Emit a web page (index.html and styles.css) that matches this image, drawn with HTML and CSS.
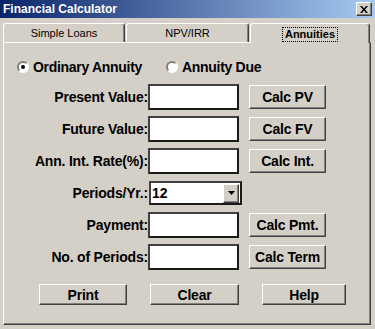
FILE: index.html
```html
<!DOCTYPE html>
<html lang="en">
<head>
  <meta charset="UTF-8" />
  <meta name="viewport" content="width=device-width, initial-scale=1.0"/>
  <title>Financial Calculator</title>
  <link rel="stylesheet" href="styles.css">
</head>
<body>

  <div class="dialog">
    <!-- title bar -->
    <div class="title-bar">
      <span class="title">Financial Calculator</span>
      <button class="close-btn" aria-label="Close">
        <svg width="8" height="7" viewBox="0 0 8 7">
          <path d="M0 0h2l2 2.5 2-2.5h2l-3 3.5 3 3.5h-2l-2-2.5-2 2.5h-2l3-3.5z" fill="#000"/>
        </svg>
      </button>
    </div>

    <!-- tabs -->
    <div class="tabs">
      <div class="tab tab-first">Simple Loans</div>
      <div class="tab tab-second">NPV/IRR</div>
      <div class="tab active"><span class="focus">Annuities</span></div>
    </div>

    <div class="panel">
      <div class="radio-row">
        <label class="radio radio-first"><span class="dot checked"></span>Ordinary Annuity</label>
        <label class="radio"><span class="dot"></span>Annuity Due</label>
      </div>

      <div class="row">
        <span class="label">Present Value:</span>
        <input class="field" type="text" />
        <button class="btn calc">Calc PV</button>
      </div>
      <div class="row">
        <span class="label">Future Value:</span>
        <input class="field" type="text" />
        <button class="btn calc">Calc FV</button>
      </div>
      <div class="row">
        <span class="label">Ann. Int. Rate(%):</span>
        <input class="field" type="text" />
        <button class="btn calc">Calc Int.</button>
      </div>
      <div class="row">
        <span class="label">Periods/Yr.:</span>
        <div class="combo">
          <span class="combo-value">12</span>
          <span class="combo-arrow">
            <svg width="7" height="4" viewBox="0 0 7 4"><path d="M0 0h7l-3.5 4z" fill="#000"/></svg>
          </span>
        </div>
      </div>
      <div class="row">
        <span class="label">Payment:</span>
        <input class="field" type="text" />
        <button class="btn calc">Calc Pmt.</button>
      </div>
      <div class="row">
        <span class="label">No. of Periods:</span>
        <input class="field" type="text" />
        <button class="btn calc">Calc Term</button>
      </div>

      <div class="actions">
        <button class="btn print">Print</button>
        <button class="btn clear">Clear</button>
        <button class="btn help">Help</button>
      </div>
    </div>
  </div>

</body>
</html>
```

FILE: styles.css
```css
* {
  margin: 0;
  padding: 0;
  box-sizing: border-box;
  font-family: "Liberation Sans", Arial, sans-serif;
}

body, html {
  height: 100%;
  overflow: hidden;
  background-color: #d4d0c8;
}

.dialog {
  width: 375px;
  height: 329px;
  background-color: #d4d0c8;
}

/* title bar */
.title-bar {
  height: 18px;
  display: flex;
  align-items: center;
  justify-content: space-between;
  padding: 0 3px 0 3px;
  background: linear-gradient(to right, #0a246a, #a6caf0);
}

.title {
  color: #fff;
  font-size: 12px;
  font-weight: bold;
}

.close-btn {
  width: 16px;
  height: 14px;
  display: flex;
  align-items: center;
  justify-content: center;
  background-color: #d4d0c8;
  border: 1px solid;
  border-color: #fff #404040 #404040 #fff;
  box-shadow: inset -1px -1px 0 #808080;
}

/* tabs */
.tabs {
  display: flex;
  height: 19px;
  margin-top: 5px;
  padding-left: 3px;
}

.tab {
  height: 19px;
  display: flex;
  align-items: center;
  justify-content: center;
  font-size: 11px;
  color: #000;
  border: 1px solid;
  border-bottom: none;
  border-color: #fff #404040 #404040 #fff;
  border-radius: 3px 3px 0 0;
  box-shadow: inset -1px 0 0 #808080;
}

.tab-first {
  width: 122px;
}

.tab-second {
  width: 123px;
  margin-left: 1px;
}

.tab.active {
  width: 120px;
  height: 20px;
  margin-left: 1px;
  font-weight: bold;
  position: relative;
  z-index: 1;
  background-color: #d4d0c8;
  padding-top: 1px;
}

.focus {
  border: 1px dotted #000;
  padding: 0 2px;
  line-height: 13px;
}

/* panel */
.panel {
  width: 368px;
  height: 283px;
  margin-left: 3px;
  border: 1px solid;
  border-color: #fff #404040 #404040 #fff;
  box-shadow: inset -1px -1px 0 #808080;
}

.radio-row {
  display: flex;
  align-items: center;
  height: 14px;
  margin-top: 17px;
  padding-left: 13px;
}

.radio {
  display: flex;
  align-items: center;
  gap: 4px;
  font-size: 14px;
  font-weight: bold;
  letter-spacing: -0.3px;
}

.radio-first {
  width: 149px;
}

.dot {
  width: 12px;
  height: 12px;
  border-radius: 50%;
  background-color: #fff;
  border: 2px solid;
  border-color: #808080 #fff #fff #808080;
  display: flex;
  align-items: center;
  justify-content: center;
}

.dot.checked::after {
  content: "";
  width: 4px;
  height: 4px;
  border-radius: 50%;
  background-color: #000;
}

/* form rows */
.row {
  display: flex;
  align-items: center;
  height: 26px;
  margin-top: 6px;
}

.radio-row + .row {
  margin-top: 10px;
}

.label {
  width: 144px;
  text-align: right;
  font-size: 14px;
  font-weight: bold;
  letter-spacing: -0.2px;
}

.field {
  width: 91px;
  height: 26px;
  background-color: #fff;
  border: 2px solid;
  border-color: #404040 #1a1a1a #1a1a1a #404040;
  outline: none;
  font-size: 13px;
}

.btn {
  background-color: #d4d0c8;
  border: 1px solid;
  border-color: #fff #404040 #404040 #fff;
  box-shadow: inset -1px -1px 0 #808080;
  font-size: 14px;
  font-weight: bold;
  letter-spacing: -0.2px;
  color: #000;
}

.calc {
  width: 77px;
  height: 24px;
  margin-left: 10px;
}

.combo {
  width: 93px;
  height: 24px;
  margin-left: 1px;
  display: flex;
  align-items: center;
  justify-content: space-between;
  background-color: #fff;
  border: 2px solid;
  border-color: #404040 #1a1a1a #1a1a1a #404040;
  padding-right: 1px;
}

.combo-value {
  font-size: 14px;
  font-weight: bold;
  padding-left: 1px;
}

.combo-arrow {
  width: 16px;
  height: 19px;
  display: flex;
  align-items: center;
  justify-content: center;
  background-color: #d4d0c8;
  border: 1px solid;
  border-color: #fff #404040 #404040 #fff;
  box-shadow: inset -1px -1px 0 #808080;
}

/* bottom buttons */
.actions {
  display: flex;
  gap: 23px;
  margin-top: 14px;
  padding-left: 35px;
}

.actions .btn {
  height: 21px;
}

.print {
  width: 88px;
}

.clear {
  width: 89px;
}

.help {
  width: 84px;
}
```
